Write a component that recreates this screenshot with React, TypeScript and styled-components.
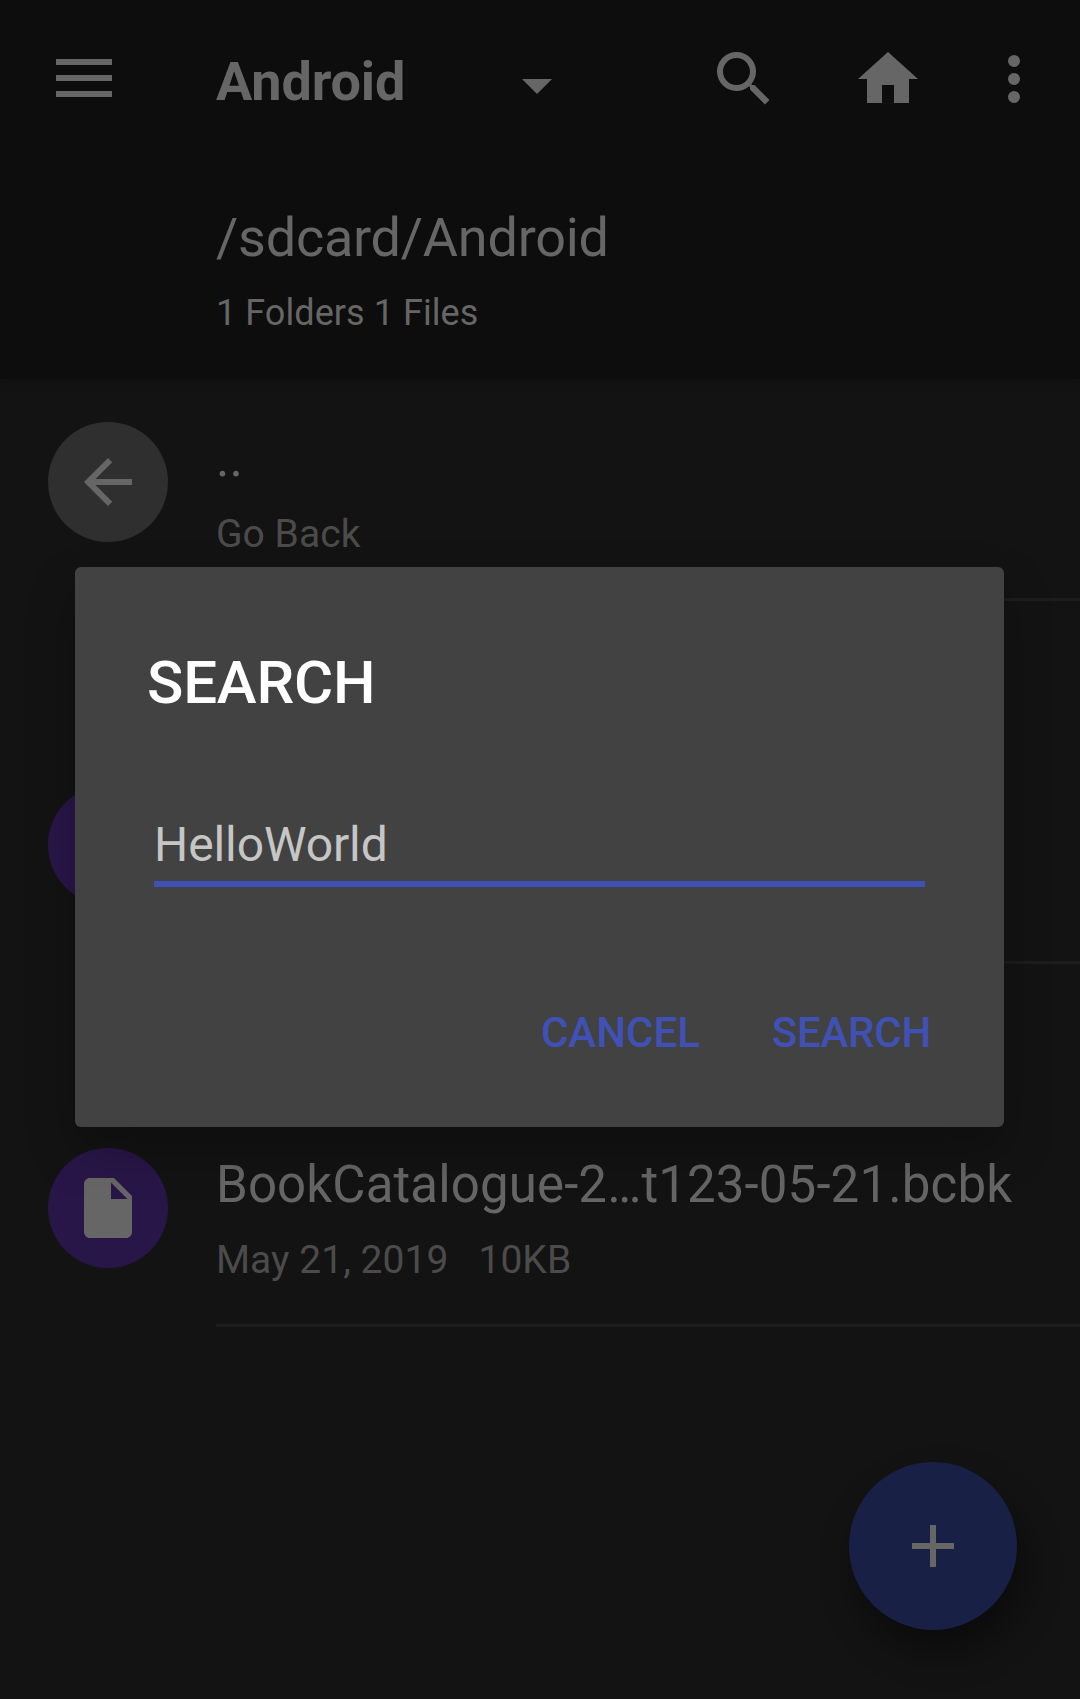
import React from "react";
import styled, { createGlobalStyle } from "styled-components";

const GlobalStyle = createGlobalStyle`
  *, *::before, *::after { box-sizing: border-box; }
  body { margin: 0; background: #131313; overflow: hidden; }
`;

const Screen = styled.div`
  position: relative;
  width: 1080px;
  height: 1699px;
  overflow: hidden;
  background: #131313;
  color: #666;
  font-family: Roboto, "Liberation Sans", sans-serif;
`;

const Header = styled.header`
  height: 379px;
  background: #0d0d0d;
  box-shadow: 0 3px 10px rgba(0, 0, 0, 0.2);
`;

const Toolbar = styled.div`
  display: flex;
  align-items: center;
  height: 158px;
  padding: 0 30px 0 56px;
`;

const Icon = styled.svg<{ $w: number; $h?: number }>`
  display: block;
  flex: none;
  width: ${(p) => p.$w}px;
  height: ${(p) => p.$h ?? p.$w}px;
  fill: currentColor;
`;

const StorageTitle = styled.h1`
  width: 306px;
  margin: 0 0 0 104px;
  padding-top: 5px;
  font-size: 54px;
  font-weight: 700;
  letter-spacing: -0.15px;
  line-height: 64px;
`;

const Actions = styled.div`
  display: flex;
  align-items: center;
  margin-left: auto;
`;

const ActionButton = styled.button<{ $gap?: number }>`
  margin: 0 0 0 ${(p) => p.$gap ?? 0}px;
  padding: 0;
  border: 0;
  background: none;
  color: inherit;
`;

const PathBlock = styled.div`
  padding: 48px 0 0 216px;
`;

const PathText = styled.div`
  font-size: 54px;
  letter-spacing: -0.24px;
  line-height: 64px;
`;

const CountText = styled.div`
  margin-top: 21px;
  font-size: 36px;
  letter-spacing: 0.06px;
  line-height: 44px;
`;

const List = styled.main`
  display: flex;
  flex-direction: column;
`;

const Row = styled.div<{ $top: number }>`
  display: flex;
  padding: ${(p) => p.$top}px 0 0 48px;
`;

const Avatar = styled.div<{ $color: string }>`
  display: flex;
  flex: none;
  align-items: center;
  justify-content: center;
  width: 120px;
  height: 120px;
  border-radius: 50%;
  background: ${(p) => p.$color};
`;

const RowBody = styled.div`
  flex: 1;
  height: 179px;
  margin-left: 48px;
  border-bottom: 3px solid #1d1d1d;
`;

const RowName = styled.div`
  padding-top: 7px;
  font-size: 51px;
  letter-spacing: 0.13px;
  line-height: 60px;
  white-space: nowrap;
`;

const RowMeta = styled.div`
  display: flex;
  gap: 30px;
  margin-top: 21px;
  color: #4b4b4b;
  font-size: 39px;
  letter-spacing: 0.04px;
  line-height: 48px;
`;

const Fab = styled.button`
  position: absolute;
  right: 63px;
  bottom: 69px;
  display: flex;
  align-items: center;
  justify-content: center;
  width: 168px;
  height: 168px;
  padding: 0;
  border: 0;
  border-radius: 50%;
  background: #192045;
  color: #666;
  box-shadow: 8px 22px 36px rgba(0, 0, 0, 0.42);
`;

const Dialog = styled.section`
  position: absolute;
  top: 567px;
  left: 75px;
  display: flex;
  flex-direction: column;
  width: 929px;
  height: 560px;
  padding: 80px 75px 46px 72px;
  border-radius: 6px;
  background: #424242;
  box-shadow: 0 24px 48px rgba(0, 0, 0, 0.25);
`;

const DialogTitle = styled.h2`
  margin: 0;
  color: #fff;
  font-size: 60px;
  font-weight: 500;
  letter-spacing: -0.2px;
  line-height: 72px;
`;

const Field = styled.div`
  height: 70px;
  margin: 98px 4px 0 7px;
  border-bottom: 6px solid #3f51b5;
  color: #c6c6c6;
  font-size: 48px;
  letter-spacing: -0.1px;
  line-height: 56px;
`;

const DialogActions = styled.div`
  display: flex;
  justify-content: flex-end;
  gap: 72px;
  margin: 121px -2px 0 0;
`;

const DialogButton = styled.button<{ $tracking?: number }>`
  padding: 0;
  border: 0;
  background: none;
  color: #3f51b5;
  font-family: inherit;
  font-size: 42px;
  font-weight: 500;
  letter-spacing: ${(p) => p.$tracking ?? 0}px;
  line-height: 50px;
`;

type Item = {
  top: number;
  color: string;
  icon?: string;
  name?: string;
  meta?: string[];
};

const ARROW = "M20 11H7.83l5.59-5.59L12 4l-8 8 8 8 1.41-1.41L7.83 13H20v-2z";
const FILE =
  "M6 2c-1.1 0-1.99.9-1.99 2L4 20c0 1.1.89 2 1.99 2H18c1.1 0 2-.9 2-2V8l-6-6H6zm7 7V3.5L18.5 9H13z";

const items: Item[] = [
  { top: 43, color: "#2f2f2f", icon: ARROW, name: "..", meta: ["Go Back"] },
  { top: 184, color: "#291648" },
  {
    top: 184,
    color: "#291648",
    icon: FILE,
    name: "BookCatalogue-2…t123-05-21.bcbk",
    meta: ["May 21, 2019", "10KB"],
  },
];

export default function App() {
  return (
    <>
      <GlobalStyle />
      <Screen>
        <Header>
          <Toolbar>
            <Icon $w={56} $h={40} viewBox="0 0 56 40">
              <path d="M0 0h56v6H0zM0 16h56v6H0zM0 32h56v6H0z" />
            </Icon>
            <StorageTitle>Android</StorageTitle>
            <Icon $w={30} viewBox="0 0 30 30">
              <path d="M0 15h30L15 30z" />
            </Icon>
            <Actions>
              <ActionButton aria-label="Search">
                <Icon $w={72} viewBox="0 0 24 24">
                  <path d="M15.5 14h-.79l-.28-.27A6.471 6.471 0 0 0 16 9.5 6.5 6.5 0 1 0 9.5 16c1.61 0 3.09-.59 4.23-1.57l.27.28v.79l5 4.99L20.49 19l-4.99-5zm-6 0C7.01 14 5 11.99 5 9.5S7.01 5 9.5 5 14 7.01 14 9.5 11.99 14 9.5 14z" />
                </Icon>
              </ActionButton>
              <ActionButton aria-label="Home" $gap={72}>
                <Icon $w={72} viewBox="0 0 24 24">
                  <path d="M10 20v-6h4v6h5v-8h3L12 3 2 12h3v8z" />
                </Icon>
              </ActionButton>
              <ActionButton aria-label="More" $gap={54}>
                <Icon $w={72} viewBox="0 0 24 24">
                  <circle cx="12" cy="6" r="2" />
                  <circle cx="12" cy="12" r="2" />
                  <circle cx="12" cy="18" r="2" />
                </Icon>
              </ActionButton>
            </Actions>
          </Toolbar>
          <PathBlock>
            <PathText>/sdcard/Android</PathText>
            <CountText>1 Folders 1 Files</CountText>
          </PathBlock>
        </Header>

        <List>
          {items.map((item, i) => (
            <Row key={i} $top={item.top}>
              <Avatar $color={item.color}>
                {item.icon && (
                  <Icon $w={72} viewBox="0 0 24 24">
                    <path d={item.icon} />
                  </Icon>
                )}
              </Avatar>
              <RowBody>
                {item.name && <RowName>{item.name}</RowName>}
                {item.meta && (
                  <RowMeta>
                    {item.meta.map((m) => (
                      <span key={m}>{m}</span>
                    ))}
                  </RowMeta>
                )}
              </RowBody>
            </Row>
          ))}
        </List>

        <Fab aria-label="Add">
          <Icon $w={72} viewBox="0 0 24 24">
            <path d="M19 13h-6v6h-2v-6H5v-2h6V5h2v6h6v2z" />
          </Icon>
        </Fab>

        <Dialog role="dialog">
          <DialogTitle>SEARCH</DialogTitle>
          <Field>HelloWorld</Field>
          <DialogActions>
            <DialogButton>CANCEL</DialogButton>
            <DialogButton $tracking={-0.25}>SEARCH</DialogButton>
          </DialogActions>
        </Dialog>
      </Screen>
    </>
  );
}
